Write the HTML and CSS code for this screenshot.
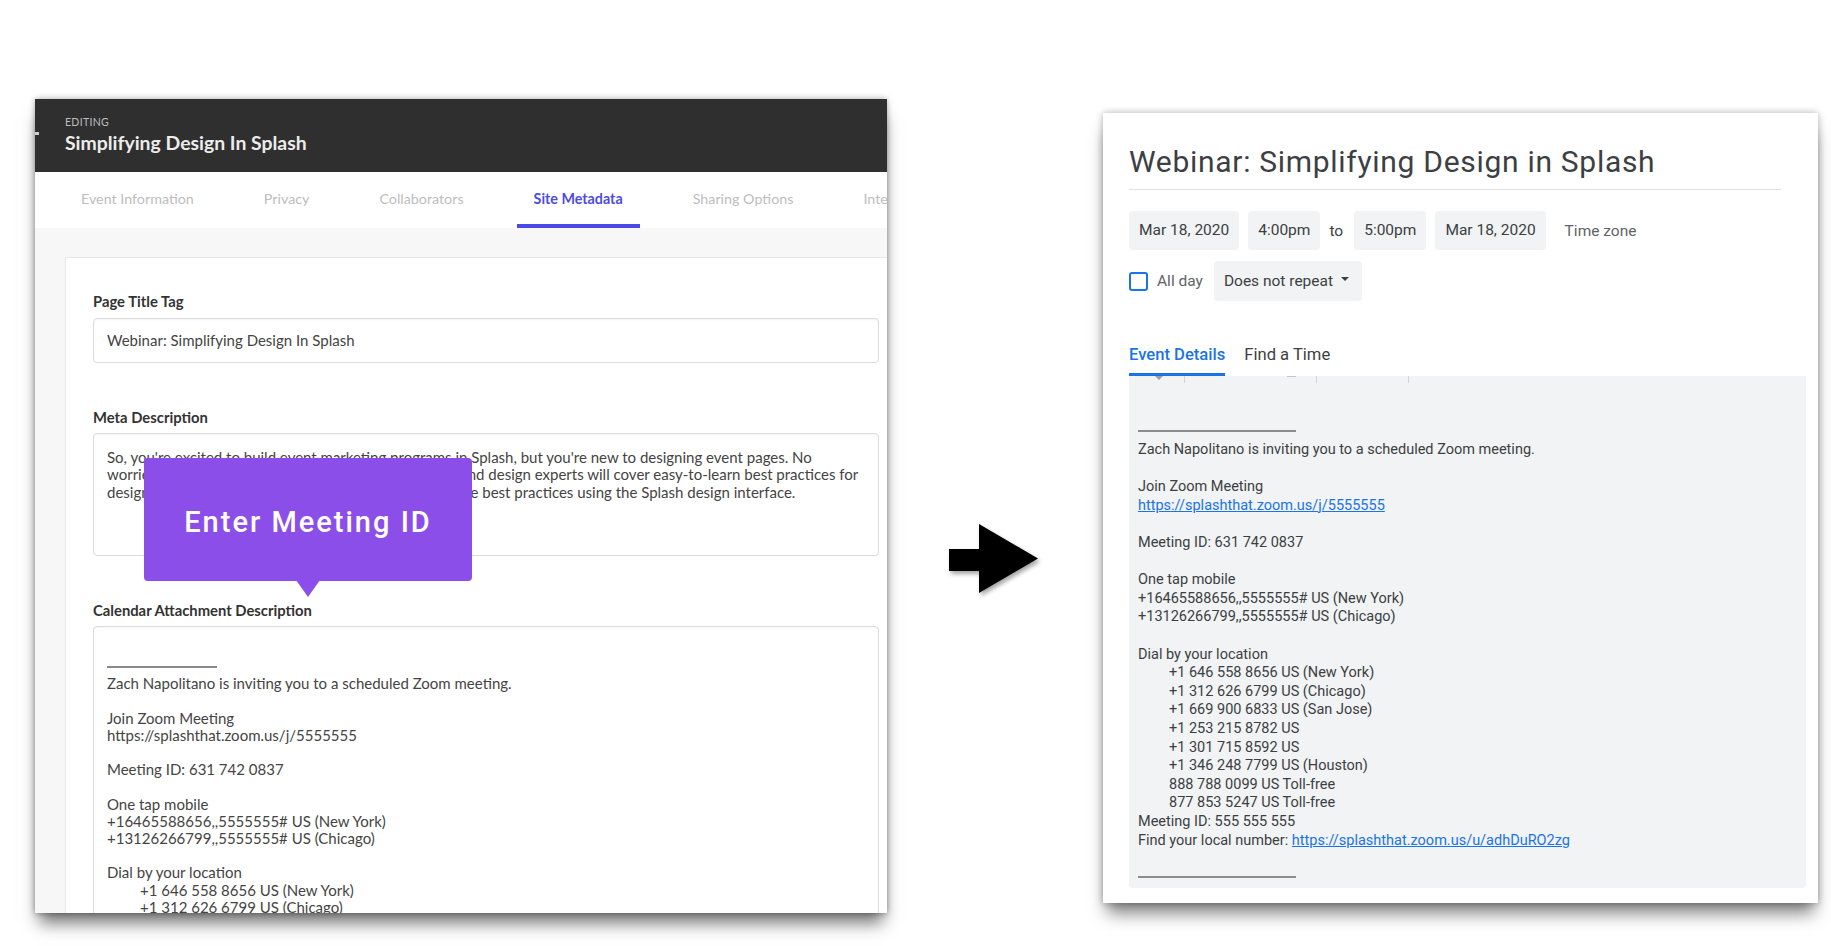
FILE: index.html
```html
<!DOCTYPE html>
<html lang="en">
<head>
<meta charset="utf-8">
<title>Splash to Google Calendar</title>
<link rel="stylesheet" href="styles.css">
</head>
<body>
<div class="stage">
  <section class="splash">
    <header class="sp-head">
      <span class="back-tick"></span>
      <div class="eyebrow">EDITING</div>
      <div class="sp-title">Simplifying Design In Splash</div>
    </header>
    <nav class="sp-tabs">
      <span class="sp-tab">Event Information</span>
      <span class="sp-tab">Privacy</span>
      <span class="sp-tab">Collaborators</span>
      <span class="sp-tab active">Site Metadata</span>
      <span class="sp-tab">Sharing Options</span>
      <span class="sp-tab">Integrations</span>
    </nav>
    <div class="sp-body">
      <div class="card">
        <div class="fld-label">Page Title Tag</div>
        <div class="input">Webinar: Simplifying Design In Splash</div>
        <div class="fld-label gap">Meta Description</div>
        <div class="textarea meta">So, you're excited to build event marketing programs in Splash, but you're new to designing event pages. No<br>worries! In this webinar, our resident event marketing and design experts will cover easy-to-learn best practices for<br>designing event pages, and show you how to apply these best practices using the Splash design interface.</div>
        <div class="fld-label gap">Calendar Attachment Description</div>
        <div class="textarea cal">
          <div class="ln"></div>
          <div class="ln hr"></div>
          <div class="ln">Zach Napolitano is inviting you to a scheduled Zoom meeting.</div>
          <div class="ln"></div>
          <div class="ln">Join Zoom Meeting</div>
          <div class="ln">https://splashthat.zoom.us/j/5555555</div>
          <div class="ln"></div>
          <div class="ln">Meeting ID: 631 742 0837</div>
          <div class="ln"></div>
          <div class="ln">One tap mobile</div>
          <div class="ln">+16465588656,,5555555# US (New York)</div>
          <div class="ln">+13126266799,,5555555# US (Chicago)</div>
          <div class="ln"></div>
          <div class="ln">Dial by your location</div>
          <div class="ln ind">+1 646 558 8656 US (New York)</div>
          <div class="ln ind">+1 312 626 6799 US (Chicago)</div>
        </div>
        <div class="tooltip">Enter Meeting ID</div>
      </div>
    </div>
  </section>

  <div class="arrow">
    <svg width="89" height="69" viewBox="0 0 89 69"><path d="M0 25 H30 V0 L89 34.5 L30 69 V47 H0 Z" fill="#000"/></svg>
  </div>

  <section class="gcal">
    <h1 class="gc-title">Webinar: Simplifying Design in Splash</h1>
    <div class="gc-row">
      <span class="chip">Mar 18, 2020</span>
      <span class="chip">4:00pm</span>
      <span class="to">to</span>
      <span class="chip">5:00pm</span>
      <span class="chip">Mar 18, 2020</span>
      <span class="tz">Time zone</span>
    </div>
    <div class="gc-row second">
      <span class="checkbox"></span>
      <span class="allday">All day</span>
      <span class="chip repeat">Does not repeat <span class="caret"></span></span>
    </div>
    <div class="gc-tabs">
      <span class="gc-tab active">Event Details</span>
      <span class="gc-tab">Find a Time</span>
    </div>
    <div class="gc-desc">
      <div class="ticks"><span class="t-caret"></span><span class="t-bar b1"></span><span class="t-dash"></span><span class="t-bar b2"></span><span class="t-bar b3"></span></div>
      <div class="row"></div>
      <div class="row"></div>
      <div class="row hr"></div>
      <div class="row">Zach Napolitano is inviting you to a scheduled Zoom meeting.</div>
      <div class="row"></div>
      <div class="row">Join Zoom Meeting</div>
      <div class="row"><a class="lnk">https://splashthat.zoom.us/j/5555555</a></div>
      <div class="row"></div>
      <div class="row">Meeting ID: 631 742 0837</div>
      <div class="row"></div>
      <div class="row">One tap mobile</div>
      <div class="row">+16465588656,,5555555# US (New York)</div>
      <div class="row">+13126266799,,5555555# US (Chicago)</div>
      <div class="row"></div>
      <div class="row">Dial by your location</div>
      <div class="row ind">+1 646 558 8656 US (New York)</div>
      <div class="row ind">+1 312 626 6799 US (Chicago)</div>
      <div class="row ind">+1 669 900 6833 US (San Jose)</div>
      <div class="row ind">+1 253 215 8782 US</div>
      <div class="row ind">+1 301 715 8592 US</div>
      <div class="row ind">+1 346 248 7799 US (Houston)</div>
      <div class="row ind">888 788 0099 US Toll-free</div>
      <div class="row ind">877 853 5247 US Toll-free</div>
      <div class="row">Meeting ID: 555 555 555</div>
      <div class="row">Find your local number: <a class="lnk">https://splashthat.zoom.us/u/adhDuRO2zg</a></div>
      <div class="row"></div>
      <div class="row hr"></div>
    </div>
  </section>
</div>
</body>
</html>
```

FILE: styles.css
```css
* { box-sizing: border-box; }
html, body { margin: 0; padding: 0; background: #fff; }
body { width: 1831px; height: 946px; overflow: hidden; }

.stage {
  display: flex;
  align-items: flex-start;
  padding: 99px 0 0 35px;
}

/* ---------- Splash panel ---------- */
.splash {
  width: 852px;
  height: 814px;
  overflow: hidden;
  background: #f7f7f7;
  box-shadow: 0 14px 16px -4px rgba(0,0,0,0.55), 0 0 6px rgba(0,0,0,0.35);
  font-family: Lato, "Liberation Sans", sans-serif;
  flex: none;
}
.sp-head {
  position: relative;
  height: 73px;
  background: #2f2f2f;
  padding: 17px 0 0 30px;
}
.back-tick {
  position: absolute;
  left: 0;
  top: 33px;
  width: 4px;
  height: 3px;
  background: #cfcfcf;
}
.eyebrow {
  font-size: 10.5px;
  line-height: 12px;
  color: #bdbdbd;
  letter-spacing: 0.3px;
}
.sp-title {
  margin-top: 2px;
  font-size: 19.4px;
  line-height: 26px;
  font-weight: 700;
  color: #ececec;
}
.sp-tabs {
  height: 56px;
  background: #fff;
  display: flex;
  gap: 36px;
  padding-left: 29px;
  white-space: nowrap;
}
.sp-tab {
  padding: 17px 17px 0;
  font-size: 14.3px;
  line-height: 19px;
  color: #bdbdbd;
  border-bottom: 4px solid transparent;
}
.sp-tab.active {
  color: #4c4ce2;
  font-weight: 700;
  border-bottom-color: #4a4ae6;
  height: 56px;
}
.sp-body {
  padding: 29px 0 0 30px;
}
.card {
  position: relative;
  width: 846px;
  background: #fff;
  border: 1px solid #e8e8e8;
  padding: 34px 31px 0 27px;
}
.fld-label {
  font-size: 14.8px;
  line-height: 18px;
  font-weight: 700;
  color: #333;
  margin-bottom: 8px;
}
.fld-label.gap { margin-top: 45px; margin-bottom: 7px; }
.input, .textarea {
  border: 1px solid #dcdcdc;
  border-radius: 4px;
  box-shadow: inset 0 1px 2px rgba(0,0,0,0.04);
  font-size: 15px;
  color: #444;
  padding-left: 13px;
  white-space: nowrap;
  overflow: hidden;
}
.input {
  height: 45px;
  line-height: 43px;
}
.textarea.meta {
  height: 123px;
  line-height: 17.4px;
  padding-top: 15px;
}
.textarea.cal {
  height: 320px;
  line-height: 17.2px;
  padding-top: 14px;
}
.ln { height: 17.2px; }
.ln.hr { position: relative; }
.ln.hr::after {
  content: "";
  position: absolute;
  left: 0;
  top: 8px;
  width: 110px;
  height: 2px;
  background: #8a8a8a;
}
.ln.ind { padding-left: 33px; }

.tooltip {
  position: absolute;
  left: 78px;
  top: 200px;
  width: 328px;
  height: 123px;
  background: #8b4ee8;
  border-radius: 4px;
  color: #fff;
  font-family: Roboto, "Open Sans", sans-serif;
  font-size: 29px;
  font-weight: 500;
  letter-spacing: 2px;
  display: flex;
  align-items: center;
  justify-content: center;
  padding-top: 4px;
}
.tooltip::after {
  content: "";
  position: absolute;
  left: 152px;
  bottom: -16px;
  border-left: 12px solid transparent;
  border-right: 12px solid transparent;
  border-top: 17px solid #8b4ee8;
}

/* ---------- Arrow ---------- */
.arrow {
  flex: none;
  width: 89px;
  height: 69px;
  margin: 425px 0 0 62px;
  filter: drop-shadow(2px 3px 2px rgba(0,0,0,0.35));
}
.arrow svg { display: block; }

/* ---------- Google Calendar panel ---------- */
.gcal {
  flex: none;
  width: 715px;
  height: 790px;
  margin: 14px 0 0 65px;
  background: #fff;
  box-shadow: 0 14px 16px -4px rgba(0,0,0,0.5), 0 0 7px rgba(0,0,0,0.3);
  padding: 31px 37px 0 26px;
  font-family: Roboto, "Liberation Sans", sans-serif;
  color: #3c4043;
}
.gc-title {
  margin: 0;
  font-size: 30px;
  line-height: 35px;
  letter-spacing: 0.7px;
  font-weight: 400;
  color: #3c4043;
  padding-bottom: 10px;
  border-bottom: 1px solid #dfe1e5;
}
.gc-row {
  display: flex;
  align-items: center;
  gap: 9px;
  margin-top: 21px;
  height: 39px;
  font-size: 15.5px;
}
.gc-row.second { margin-top: 11px; height: 40px; }
.chip {
  height: 39px;
  line-height: 39px;
  padding: 0 10px;
  background: #f1f3f4;
  border-radius: 4px;
  white-space: nowrap;
  color: #3c4043;
}
.to { margin: 0 2px 0 0; color: #3c4043; }
.tz { margin-left: 10px; color: #5f6368; }
.checkbox {
  width: 19px;
  height: 19px;
  border: 2px solid #1a73e8;
  border-radius: 3px;
}
.allday { color: #5f6368; margin-right: 2px; }
.chip.repeat {
  height: 40px;
  line-height: 40px;
  padding: 0 13px 0 10px;
  display: flex;
  align-items: center;
  gap: 8px;
}
.caret {
  width: 0;
  height: 0;
  border-left: 4px solid transparent;
  border-right: 4px solid transparent;
  border-top: 4px solid #3c4043;
  margin-bottom: 4px;
}
.gc-tabs {
  display: flex;
  gap: 19px;
  margin-top: 35px;
  font-size: 16.6px;
}
.gc-tab {
  padding-top: 9px;
  line-height: 19px;
  height: 40px;
  border-bottom: 3px solid transparent;
  color: #3c4043;
}
.gc-tab.active {
  color: #1a73e8;
  font-weight: 500;
  border-bottom-color: #1a73e8;
  border-radius: 2px 2px 0 0;
}
.gc-desc {
  margin: 0 -25px 0 0;
  background: #f1f3f4;
  border-radius: 0 0 4px 4px;
  padding: 0 0 3px 9px;
  font-size: 14.5px;
  color: #3c4043;
}
.ticks {
  position: relative;
  height: 7px;
  margin-left: -9px;
}
.ticks span { position: absolute; top: 0; }
.t-caret {
  left: 26px;
  border-left: 4px solid transparent;
  border-right: 4px solid transparent;
  border-top: 4px solid #9aa0a6;
}
.t-bar { width: 1px; height: 7px; background: #d2d4d7; }
.b1 { left: 55px; }
.b2 { left: 187px; }
.b3 { left: 279px; }
.t-dash { left: 158px; top: 1px; width: 9px; height: 1px; background: #c2c4c7; }
.row { height: 18.6px; line-height: 18.6px; padding-top: 2.3px; white-space: nowrap; }
.row.ind { padding-left: 31px; }
.row.hr { position: relative; }
.row.hr::after {
  content: "";
  position: absolute;
  left: 0;
  top: 10px;
  width: 158px;
  height: 2px;
  background: #8c8c8c;
}
.lnk { color: #1a73e8; text-decoration: underline; }
```
